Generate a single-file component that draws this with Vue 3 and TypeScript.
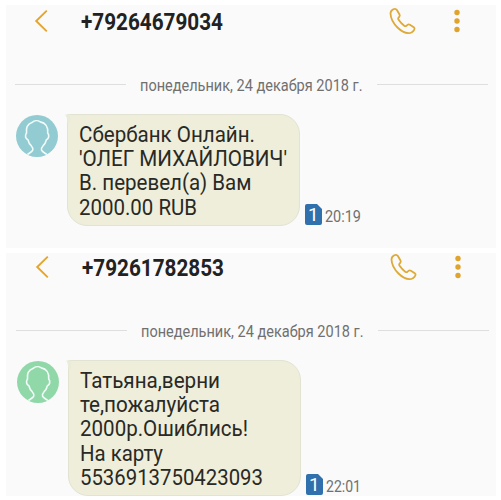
<script setup lang="ts">
interface Thread {
  phone: string
  tone: string
  lines: { text: string; width: number }[]
  time: string
  timeWidth: number
}

const date = 'понедельник, 24 декабря 2018 г.'
const threads: Thread[] = [
  {
    phone: '+79264679034',
    tone: 'blue',
    lines: [
      { text: 'Сбербанк Онлайн.', width: 176 },
      { text: "'ОЛЕГ МИХАЙЛОВИЧ'", width: 208 },
      { text: 'В. перевел(а) Вам', width: 172.5 },
      { text: '2000.00 RUB', width: 118 },
    ],
    time: '20:19',
    timeWidth: 36,
  },
  {
    phone: '+79261782853',
    tone: 'green',
    lines: [
      { text: 'Татьяна,верни', width: 140 },
      { text: 'те,пожалуйста', width: 140 },
      { text: '2000р.Ошиблись!', width: 168 },
      { text: 'На карту', width: 83 },
      { text: '5536913750423093', width: 183 },
    ],
    time: '22:01',
    timeWidth: 35,
  },
]
</script>

<template>
  <main class="page">
    <section v-for="t in threads" :key="t.phone" class="thread" :class="t.tone">
      <header class="bar">
        <svg class="back" width="14" height="24" viewBox="0 0 14 24">
          <path d="M12.800 1.600 2.200 12l10.600 10.400" />
        </svg>
        <svg class="phone" width="144" height="30">
          <text x="0" y="24" textLength="142" lengthAdjust="spacingAndGlyphs">{{ t.phone }}</text>
        </svg>
        <svg class="call" width="28" height="28" viewBox="0 0 28 28">
          <path d="M5.300 2.300C3.500 3.200 2.500 4.600 2.500 6.500C2.700 11.500 5.500 16.500 9.500 20.500C13 23.900 16.800 26 20.300 26.200C22.800 26.300 25 25 26.300 22.600C26.900 21.500 26.700 20.800 25.800 20.200L21.900 17.700C21 17.200 20.200 17.300 19.500 17.900L18.300 18.900C17.700 19.300 17.100 19.300 16.500 18.900C14.300 17.400 12 15 10.400 12.600C10 11.900 10 11.300 10.500 10.700L11.400 9.600C11.900 8.900 11.900 8.200 11.500 7.500L8.900 3C8 1.700 6.800 1.600 5.300 2.300Z" />
        </svg>
        <svg class="more" width="8" height="24" viewBox="0 0 8 24">
          <circle cx="4" cy="3.500" r="2.700" /><circle cx="4" cy="12" r="2.700" /><circle cx="4" cy="20.500" r="2.700" />
        </svg>
      </header>
      <div class="date">
        <i class="rule" />
        <svg width="224" height="24">
          <text x="0" y="18.500" textLength="222.500" lengthAdjust="spacingAndGlyphs">{{ date }}</text>
        </svg>
        <i class="rule" />
      </div>
      <div class="message">
        <svg class="avatar" width="42" height="42" viewBox="0 0 42 42">
          <circle cx="21" cy="21" r="21" />
          <path d="M11.500 39.500c2-1.400 4.400-2.600 5.300-4.300.5-1.600-.4-3.200-1.600-4.500-1.400-1.300-2.600-3.200-3.300-6-1.800-.7-2.500-3.200-2.200-5 .1-.8.600-1.100.8-1.700-.5-5.200 1.700-9.300 5.500-10.500 2.300-2.200 5.900-2.200 8.300-.6 5 .9 8 5 7.400 11.100.2.600.8.900.9 1.700.3 2-.5 4.300-2.200 5-.7 2.800-1.900 4.700-3.300 6-1.200 1.300-2.100 2.900-1.600 4.500.9 1.700 3.300 2.900 5.300 4.300" />
        </svg>
        <div class="bubble">
          <svg class="tail" width="5" height="9" viewBox="0 0 5 9">
            <path d="M0 .5h5V9H2.500Q2.300 3 0 .5Z" />
          </svg>
          <svg v-for="line in t.lines" :key="line.text" class="line" width="212" height="24.200">
            <text x="0" y="19.300" :textLength="line.width" lengthAdjust="spacingAndGlyphs">{{ line.text }}</text>
          </svg>
        </div>
        <div class="meta">
          <svg class="sim" width="17" height="21" viewBox="0 0 17 21">
            <path d="M2 0h10l5 5v14q0 2-2 2H2q-2 0-2-2V2q0-2 2-2Z" />
            <text x="8.300" y="17" text-anchor="middle">1</text>
          </svg>
          <svg class="time" width="38" height="21">
            <text x="0" y="17.500" :textLength="t.timeWidth" lengthAdjust="spacingAndGlyphs">{{ t.time }}</text>
          </svg>
        </div>
      </div>
    </section>
  </main>
</template>

<style>
body {
  margin: 0;
  background: #fff;
}
</style>

<style scoped>
.page {
  box-sizing: border-box;
  width: 501px;
  height: 500px;
  padding: 5px 5px 4px 6px;
  display: flex;
  flex-direction: column;
  gap: 5px;
  background: #fff;
  font-family: Roboto, "Liberation Sans", sans-serif;
  overflow: hidden;
}
svg {
  display: block;
  flex: none;
  overflow: visible;
}
.thread {
  height: 243px;
  background: #fafafa;
  overflow: hidden;
}
.thread.green {
  padding-left: 1px;
}
.bar {
  display: flex;
  align-items: center;
  height: 31px;
  padding-left: 28px;
}
.green .bar {
  height: 27px;
}
.back path {
  fill: none;
  stroke: #e5a52c;
  stroke-width: 1.900;
}
.phone {
  margin-left: 33px;
}
.phone text {
  font-size: 23.500px;
  font-weight: 700;
  fill: #222;
}
.call {
  margin-left: 163px;
}
.call path {
  fill: none;
  stroke: #deaa37;
  stroke-width: 1.800;
  stroke-linejoin: round;
}
.more {
  margin-left: 37px;
  fill: #e0a32b;
}
.date {
  display: flex;
  align-items: center;
  height: 24px;
  margin-top: 36px;
  padding-left: 9px;
}
.green .date {
  margin-top: 38px;
}
.rule {
  width: 111px;
  height: 1px;
  background: #dedede;
}
.date text {
  font-size: 17px;
  fill: #707070;
}
.date svg {
  margin: 0 13px 0 14px;
}
.message {
  display: flex;
  align-items: flex-start;
  margin-top: 18px;
  padding-left: 10px;
}
.avatar {
  margin-top: 1px;
}
.avatar circle {
  fill: #92cbd2;
}
.green .avatar circle {
  fill: #91d8a9;
}
.avatar path {
  fill: none;
  stroke: #f1fbf8;
  stroke-width: 1.600;
  stroke-linejoin: round;
}
.bubble {
  position: relative;
  box-sizing: border-box;
  width: 233px;
  height: 112px;
  margin-left: 9px;
  padding: 8px 0 0 10.500px;
  background: #eeeedb;
  border: 1px solid #e2e3d3;
  border-radius: 0 20px 20px 20px;
}
.green .bubble {
  height: 136px;
}
.tail {
  position: absolute;
  left: -3px;
  top: -1px;
}
.tail path {
  fill: #eaebd9;
}
.line text {
  font-size: 21.300px;
  fill: #292925;
}
.meta {
  display: flex;
  align-self: flex-end;
  margin-left: 5px;
  margin-bottom: 1px;
  gap: 3px;
}
.sim path {
  fill: #3070ad;
}
.sim text {
  font-size: 19px;
  fill: #fff;
}
.time text {
  font-size: 17px;
  fill: #707070;
}
</style>
